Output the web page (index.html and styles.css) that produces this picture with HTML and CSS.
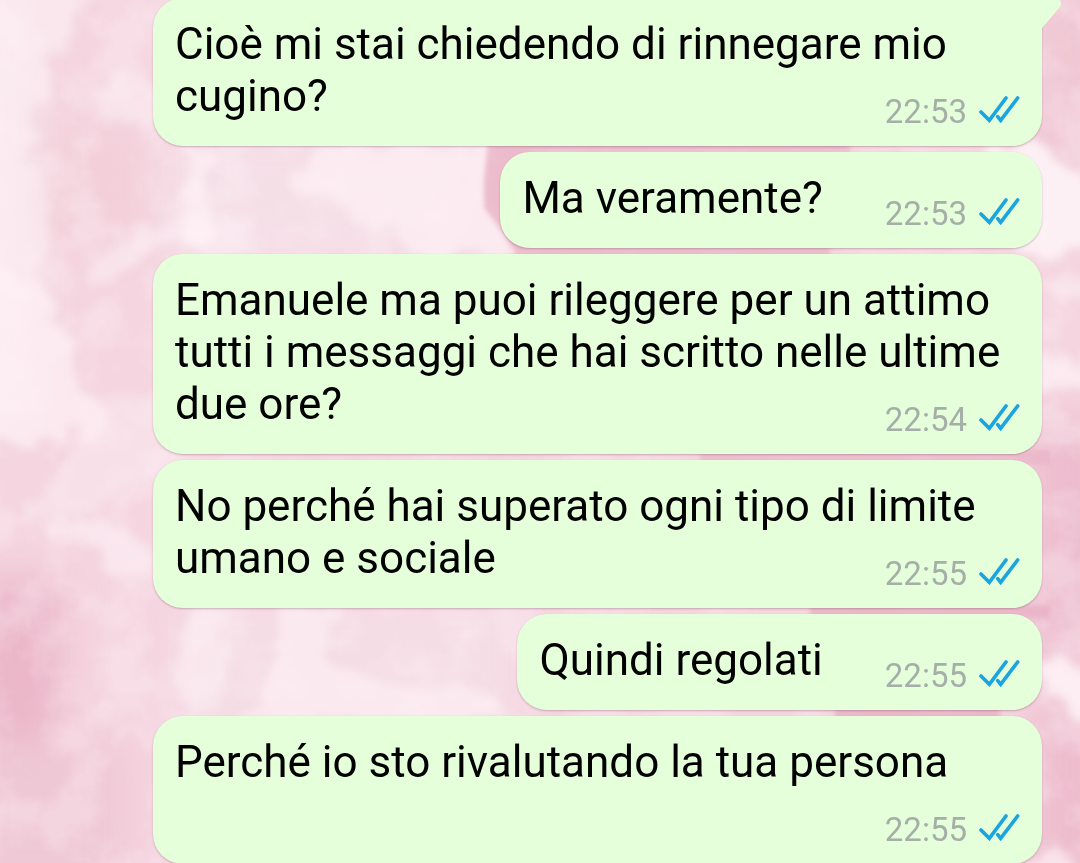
FILE: index.html
```html
<!DOCTYPE html>
<html lang="it">
<head>
  <meta charset="UTF-8">
  <meta name="viewport" content="width=device-width, initial-scale=1">
  <title>Chat</title>
  <link rel="stylesheet" href="styles.css">
</head>
<body>
  <!-- pink clouds wallpaper -->
  <svg class="wallpaper" viewBox="0 0 1080 863" preserveAspectRatio="xMidYMid slice" aria-hidden="true">
    <defs>
      <filter id="puff" x="-20%" y="-20%" width="140%" height="140%" color-interpolation-filters="sRGB">
        <feTurbulence type="fractalNoise" baseFrequency="0.03" numOctaves="4" seed="7" result="noise"/>
        <feDisplacementMap in="SourceGraphic" in2="noise" scale="50" xChannelSelector="R" yChannelSelector="G"/>
        <feGaussianBlur stdDeviation="5"/>
      </filter>
      <filter id="soft" x="-20%" y="-20%" width="140%" height="140%">
        <feGaussianBlur stdDeviation="2"/>
      </filter>
      <filter id="haze" x="-20%" y="-20%" width="140%" height="140%" color-interpolation-filters="sRGB">
        <feGaussianBlur stdDeviation="20"/>
      </filter>
      <filter id="mist" x="0" y="0" width="100%" height="100%" color-interpolation-filters="sRGB">
        <feTurbulence type="fractalNoise" baseFrequency="0.02" numOctaves="4" seed="12"/>
        <feColorMatrix values="0 0 0 0 1  0 0 0 0 0.96  0 0 0 0 0.98  3 0 0 0 -1.2"/>
      </filter>
    </defs>
    <rect width="1080" height="863" fill="#f5d5e0"/>
    <g filter="url(#haze)">
      <rect x="-30" y="-30" width="65" height="460" fill="#f7e6ec"/>
      <rect x="40" y="130" width="100" height="110" fill="#f2cfd9"/>
      <rect x="-30" y="580" width="90" height="200" fill="#eab6c8"/>
      <rect x="-30" y="740" width="160" height="150" fill="#efc8d5"/>
      <rect x="170" y="130" width="320" height="130" fill="#f5dfe7"/>
      <rect x="180" y="600" width="340" height="130" fill="#f5dde5"/>
      <rect x="1030" y="-30" width="80" height="200" fill="#efc7d4"/>
      <rect x="1030" y="420" width="80" height="240" fill="#ecbccd"/>
      <rect x="1030" y="700" width="80" height="190" fill="#edbccd"/>
    </g>
    <rect width="1080" height="863" filter="url(#mist)" opacity="0.3"/>
    <g filter="url(#puff)" fill="#fdf1f5">
      <path d="M-20 -20 H85 L80 35 L45 60 L40 110 L30 160 L45 240 L30 300 L-20 300 Z" opacity="0.5"/>
      <path d="M-20 260 L40 275 L62 330 L80 375 L105 415 L100 440 L60 430 L30 460 L-20 440 Z" opacity="0.7"/>
      <path d="M90 90 L130 70 L165 90 V110 L110 125 Z" opacity="0.5"/>
      <path d="M80 275 L105 250 L150 225 L190 222 L260 215 L260 245 L150 252 L110 285 Z" opacity="0.55"/>
      <path d="M100 420 L130 390 L165 380 V470 L60 520 L20 530 L40 490 Z" opacity="0.4"/>
      <path d="M50 530 L100 520 L140 545 L155 590 L125 580 L90 550 Z" opacity="0.55"/>
      <path d="M188 150 L205 150 L203 250 L190 250 Z" opacity="0.75"/>
      <path d="M320 140 H490 L485 210 L510 240 L515 265 L450 260 L400 235 L360 215 L345 195 L300 185 Z" opacity="0.7"/>
      <path d="M190 605 H222 V720 H185 Z" opacity="0.5"/>
      <path d="M285 605 H325 L335 670 L385 690 L480 685 L515 720 H240 L270 680 Z" opacity="0.6"/>
      <path d="M1000 145 H1040 L1062 165 L1080 190 L1110 195 V240 L1050 250 L1000 240 Z" opacity="0.95"/>
      <path d="M1030 275 L1110 285 V310 L1070 300 L1030 290 Z" opacity="0.5"/>
      <path d="M1030 345 L1060 360 L1090 370 V395 L1030 385 Z" opacity="0.75"/>
      <path d="M1030 655 L1060 660 L1100 680 V710 L1070 700 L1030 695 Z" opacity="0.9"/>
      <path d="M1030 850 L1070 855 L1080 880 H1020 Z" opacity="0.7"/>
    </g>
    <!-- darker sky between the clouds -->
    <g filter="url(#soft)" fill="#e8b0c4">
      <path d="M488 140 H850 V152 H530 V248 H512 L498 225 L484 208 L484 180 Z" opacity="0.75"/>
      <path d="M515 246 H830 V258 H515 Z" opacity="0.7"/>
      <path d="M700 450 H1050 V465 H700 Z" opacity="0.6"/>
      <path d="M810 605 H1050 V618 H810 Z" opacity="0.8"/>
      <path d="M835 706 H1000 V720 H835 Z" opacity="0.8"/>
    </g>
  </svg>

  <!-- double tick, used by every message -->
  <svg class="sprite" aria-hidden="true">
    <symbol id="ticks" viewBox="0 0 123 81">
      <path d="M6 48 L31 73 L81 6 M56 62 L65 73 L116 6" fill="none" stroke="currentColor" stroke-width="11" stroke-linecap="round" stroke-linejoin="miter"/>
    </symbol>
  </svg>

  <main class="chat">
    <div class="message first">
      <svg class="tail" viewBox="0 0 20 31" aria-hidden="true"><path d="M0 0 H15 Q21 3 18 9 L0 30 Z"/></svg>
      Cioè mi stai chiedendo di rinnegare mio cugino?
      <span class="meta"><time>22:53</time><svg class="ticks" role="img" aria-label="Letto"><use href="#ticks"/></svg></span>
    </div>
    <div class="message">
      Ma veramente?
      <span class="meta"><time>22:53</time><svg class="ticks" role="img" aria-label="Letto"><use href="#ticks"/></svg></span>
    </div>
    <div class="message">
      Emanuele ma puoi rileggere per un attimo tutti i messaggi che hai scritto nelle ultime due ore?
      <span class="meta"><time>22:54</time><svg class="ticks" role="img" aria-label="Letto"><use href="#ticks"/></svg></span>
    </div>
    <div class="message">
      No perché hai superato ogni tipo di limite umano e sociale
      <span class="meta"><time>22:55</time><svg class="ticks" role="img" aria-label="Letto"><use href="#ticks"/></svg></span>
    </div>
    <div class="message">
      Quindi regolati
      <span class="meta"><time>22:55</time><svg class="ticks" role="img" aria-label="Letto"><use href="#ticks"/></svg></span>
    </div>
    <div class="message">
      Perché io sto rivalutando la tua persona
      <span class="meta"><time>22:55</time><svg class="ticks" role="img" aria-label="Letto"><use href="#ticks"/></svg></span>
    </div>
  </main>
</body>
</html>
```
FILE: styles.css
```css
body {
  margin: 0;
  font-family: Roboto, sans-serif;
  background-color: #f4d2de;
  color: #000;
  overflow: hidden;
}
.wallpaper {
  position: fixed;
  top: 0;
  left: 0;
  width: 100%;
  height: 100%;
  z-index: -1;
}
.sprite {
  display: none;
}
.chat {
  display: flex;
  flex-direction: column;
  align-items: flex-end;
  gap: 6px;
  margin-top: -2px;
  padding: 0 38px 0 153px;
}
.message {
  display: flow-root;
  position: relative;
  padding: 20px 22px 8px;
  border-radius: 30px;
  background-color: #e5ffdb;
  box-shadow: 0 1px 2px rgba(90,50,65,0.3);
  font-size: 44px;
  line-height: 52px;
}
.first {
  border-top-right-radius: 0;
}
/* little corner that sticks out of the first bubble */
.tail {
  position: absolute;
  top: 0;
  left: 100%;
  width: 20px;
  height: 31px;
  fill: #e5ffdb;
}
.meta {
  float: right;
  display: flex;
  align-items: center;
  gap: 12px;
  margin-top: 16px;
  margin-left: 62px;
  font-size: 33px;
  color: #a5afa8;
}
.ticks {
  width: 41px;
  height: 27px;
  margin-bottom: 5px;
  color: #1ba5e0;
}
```
